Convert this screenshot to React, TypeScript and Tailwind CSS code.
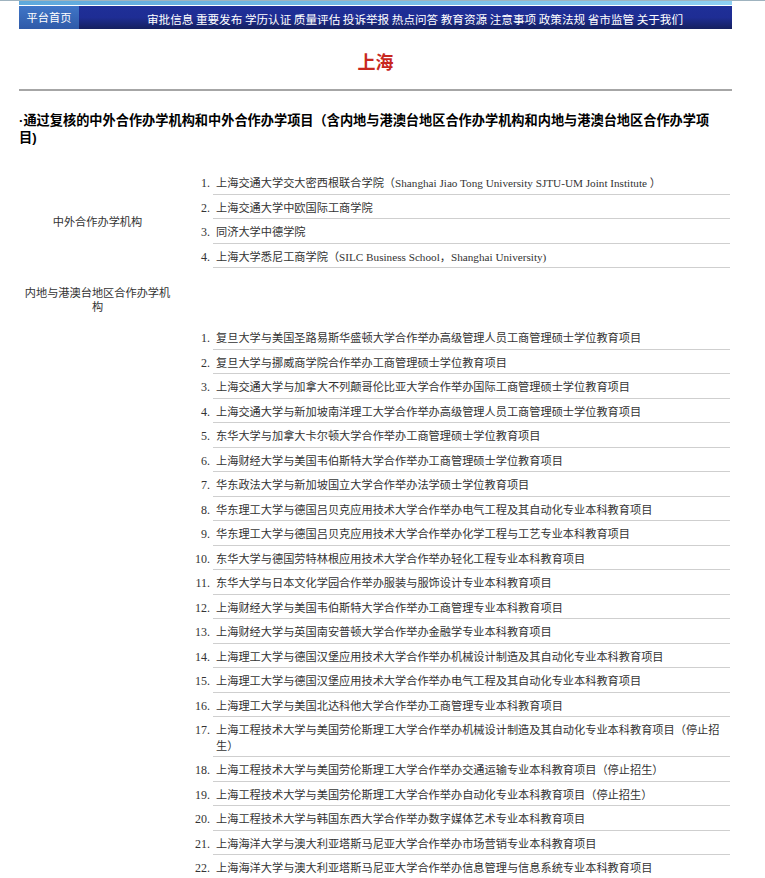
import React from "react";

const navItems = [
  "审批信息",
  "重要发布",
  "学历认证",
  "质量评估",
  "投诉举报",
  "热点问答",
  "教育资源",
  "注意事项",
  "政策法规",
  "省市监管",
  "关于我们",
];

const institutions = [
  "上海交通大学交大密西根联合学院（Shanghai Jiao Tong University SJTU-UM Joint Institute ）",
  "上海交通大学中欧国际工商学院",
  "同济大学中德学院",
  "上海大学悉尼工商学院（SILC Business School，Shanghai University)",
];

const projects = [
  "复旦大学与美国圣路易斯华盛顿大学合作举办高级管理人员工商管理硕士学位教育项目",
  "复旦大学与挪威商学院合作举办工商管理硕士学位教育项目",
  "上海交通大学与加拿大不列颠哥伦比亚大学合作举办国际工商管理硕士学位教育项目",
  "上海交通大学与新加坡南洋理工大学合作举办高级管理人员工商管理硕士学位教育项目",
  "东华大学与加拿大卡尔顿大学合作举办工商管理硕士学位教育项目",
  "上海财经大学与美国韦伯斯特大学合作举办工商管理硕士学位教育项目",
  "华东政法大学与新加坡国立大学合作举办法学硕士学位教育项目",
  "华东理工大学与德国吕贝克应用技术大学合作举办电气工程及其自动化专业本科教育项目",
  "华东理工大学与德国吕贝克应用技术大学合作举办化学工程与工艺专业本科教育项目",
  "东华大学与德国劳特林根应用技术大学合作举办轻化工程专业本科教育项目",
  "东华大学与日本文化学园合作举办服装与服饰设计专业本科教育项目",
  "上海财经大学与美国韦伯斯特大学合作举办工商管理专业本科教育项目",
  "上海财经大学与英国南安普顿大学合作举办金融学专业本科教育项目",
  "上海理工大学与德国汉堡应用技术大学合作举办机械设计制造及其自动化专业本科教育项目",
  "上海理工大学与德国汉堡应用技术大学合作举办电气工程及其自动化专业本科教育项目",
  "上海理工大学与美国北达科他大学合作举办工商管理专业本科教育项目",
  "上海工程技术大学与美国劳伦斯理工大学合作举办机械设计制造及其自动化专业本科教育项目（停止招生）",
  "上海工程技术大学与美国劳伦斯理工大学合作举办交通运输专业本科教育项目（停止招生）",
  "上海工程技术大学与美国劳伦斯理工大学合作举办自动化专业本科教育项目（停止招生）",
  "上海工程技术大学与韩国东西大学合作举办数字媒体艺术专业本科教育项目",
  "上海海洋大学与澳大利亚塔斯马尼亚大学合作举办市场营销专业本科教育项目",
  "上海海洋大学与澳大利亚塔斯马尼亚大学合作举办信息管理与信息系统专业本科教育项目",
];

const ItemList = ({ items }: { items: string[] }) => (
  <ol className="list-decimal pl-[37px] marker:text-[#333] marker:text-[12px]">
    {items.map((item) => (
      <li
        key={item}
        className="border-b border-[#cfcfcf] pl-[3px] pt-[6px] pb-[2px] leading-[15.5px]"
      >
        {item}
      </li>
    ))}
  </ol>
);

export default function App() {
  return (
    <div className="min-h-screen bg-white border-t border-[#9fb3bf] font-['Liberation_Serif','Noto_Sans_CJK_SC',serif] text-[#333]">
      <div className="ml-[19px] w-[713px]">
        {/* top nav */}
        <div className="h-[4px] bg-gradient-to-r from-[#5fa9dc] to-[#8fd0f2]" />
        <div className="h-[1px] bg-white" />
        <div className="flex h-[23px] bg-gradient-to-b from-[#1f2f98] via-[#1e2d94] to-[#15205f] font-['Noto_Sans_CJK_SC',sans-serif] text-[11.6px] leading-[23px] text-white">
          <a className="block w-[60px] text-center text-[11.2px] bg-gradient-to-b from-[#4076c8] to-[#2f5aa8]">
            平台首页
          </a>
          <div className="flex-1 pl-[19px] pt-[2px] text-center whitespace-nowrap">
            {navItems.join(" ")}
          </div>
        </div>

        {/* title */}
        <h1 className="mt-[22px] text-center font-['Noto_Sans_CJK_SC',sans-serif] text-[18px] font-bold leading-[20px] text-[#c8281e]">
          上海
        </h1>
        <div className="mt-[18px] h-[2px] bg-[#a6a6a6]" />

        {/* heading */}
        <h2 className="mt-[21px] pr-[18px] font-['Liberation_Sans','Noto_Sans_CJK_SC',sans-serif] text-[13.2px] font-bold leading-[17px] text-black">
          ·通过复核的中外合作办学机构和中外合作办学项目（含内地与港澳台地区合作办学机构和内地与港澳台地区合作办学项目)
        </h2>

        {/* table */}
        <div className="mt-[24px] text-[11.2px]">
          <div className="flex items-center">
            <div className="w-[157px] px-[3px] pt-[5px] text-center font-['Noto_Sans_CJK_SC',sans-serif] leading-[14.5px]">
              中外合作办学机构
            </div>
            <div className="flex-1 pr-[2px]">
              <ItemList items={institutions} />
            </div>
          </div>
          <div className="flex h-[57px] items-center">
            <div className="w-[157px] px-[3px] pt-[5px] text-center font-['Noto_Sans_CJK_SC',sans-serif] leading-[14.5px]">
              内地与港澳台地区合作办学机构
            </div>
            <div className="flex-1 pr-[2px]" />
          </div>
          <div className="flex items-center">
            <div className="w-[157px] px-[3px]" />
            <div className="flex-1 pr-[2px]">
              <ItemList items={projects} />
            </div>
          </div>
        </div>
      </div>
    </div>
  );
}
